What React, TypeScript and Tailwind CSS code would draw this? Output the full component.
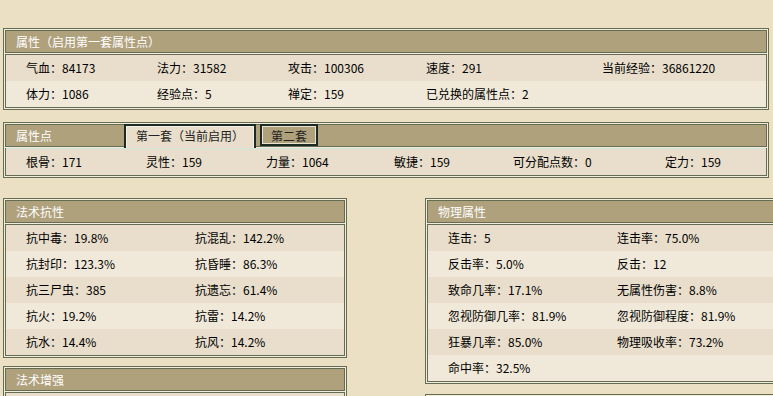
import type { ReactNode } from 'react';

// Character stat sheet: old-school table panels with double borders.
const FONT = { fontFamily: '"Noto Sans CJK SC", "Noto Sans", sans-serif' };

type Cell = [string, string] | null;

function Row({ cells, cols, dark }: { cells: Cell[]; cols: string; dark: boolean }) {
  return (
    <div
      className={`grid h-[26px] items-center pl-5 text-[12px] text-black ${cols} ${
        dark ? 'bg-[#e8decb]' : 'bg-[#f0e9d9]'
      }`}
    >
      {cells.map((c, i) => (
        <span key={i} className="whitespace-nowrap leading-none">
          {c ? `${c[0]}：${c[1]}` : ''}
        </span>
      ))}
    </div>
  );
}

function Panel({
  title,
  width,
  children,
  tabs,
}: {
  title: string;
  width: string;
  children?: ReactNode;
  tabs?: ReactNode;
}) {
  return (
    <div className={`border border-[#646d52] bg-[#f3ecdc] p-px flex flex-col gap-px ${width}`}>
      <div className="relative h-[23px] border border-[#646d52] bg-[#b0a17d] pl-[10px] flex items-center">
        <span className="text-[12px] text-white leading-none">{title}</span>
        {tabs}
      </div>
      {children && <div className="border border-[#646d52]">{children}</div>}
    </div>
  );
}

const top: Cell[][] = [
  [['气血', '84173'], ['法力', '31582'], ['攻击', '100306'], ['速度', '291'], ['当前经验', '36861220']],
  [['体力', '1086'], ['经验点', '5'], ['禅定', '159'], ['已兑换的属性点', '2'], null],
];

const points: Cell[] = [
  ['根骨', '171'],
  ['灵性', '159'],
  ['力量', '1064'],
  ['敏捷', '159'],
  ['可分配点数', '0'],
  ['定力', '159'],
];

const resist: Cell[][] = [
  [['抗中毒', '19.8%'], ['抗混乱', '142.2%']],
  [['抗封印', '123.3%'], ['抗昏睡', '86.3%']],
  [['抗三尸虫', '385'], ['抗遗忘', '61.4%']],
  [['抗火', '19.2%'], ['抗雷', '14.2%']],
  [['抗水', '14.4%'], ['抗风', '14.2%']],
];

const physical: Cell[][] = [
  [['连击', '5'], ['连击率', '75.0%']],
  [['反击率', '5.0%'], ['反击', '12']],
  [['致命几率', '17.1%'], ['无属性伤害', '8.8%']],
  [['忽视防御几率', '81.9%'], ['忽视防御程度', '81.9%']],
  [['狂暴几率', '85.0%'], ['物理吸收率', '73.2%']],
  [['命中率', '32.5%'], null],
];

function Tabs() {
  return (
    <div className="absolute left-[118px] top-[-1px] flex gap-[4px]">
      <div className="h-[24px] border-2 border-b-0 border-[#1c2a26] bg-[#e8decb]">
        <div className="h-full border border-b-0 border-[#f4f0e6] px-[9px] pt-[3px] text-[12px] leading-none text-[#222] whitespace-nowrap">
          第一套（当前启用）
        </div>
      </div>
      <div className="h-[22px] border-2 border-[#1c2a26] bg-[#b0a17d]">
        <div className="h-full border border-[#e8e2d0] px-[8px] pt-[3px] text-[12px] leading-none text-[#222] whitespace-nowrap">
          第二套
        </div>
      </div>
    </div>
  );
}

export default function App() {
  return (
    <div className="w-[773px] h-[396px] overflow-hidden bg-[#ebdfc4] pl-[3px] pt-[28px]" style={FONT}>
      <Panel title="属性（启用第一套属性点）" width="w-[766px]">
        {top.map((r, i) => (
          <Row key={i} cells={r} cols="grid-cols-[131px_131px_138px_176px_1fr]" dark={i % 2 === 0} />
        ))}
      </Panel>

      <div className="mt-[12px]">
        <Panel title="属性点" width="w-[766px]" tabs={<Tabs />}>
          <div className="border-t border-[#cfe4dc] -mt-px">
            <Row cells={points} cols="grid-cols-[120px_120px_128px_119px_152px_1fr]" dark />
          </div>
        </Panel>
      </div>

      <div className="mt-[20px] flex items-start gap-[78px]">
        <div className="flex flex-col gap-[8px]">
          <Panel title="法术抗性" width="w-[344px]">
            {resist.map((r, i) => (
              <Row key={i} cells={r} cols="grid-cols-[169px_1fr]" dark={i % 2 === 0} />
            ))}
          </Panel>
          <Panel title="法术增强" width="w-[344px]">
            <div className="h-[26px] bg-[#e8decb]" />
          </Panel>
        </div>
        <div className="flex flex-col gap-[10px] shrink-0">
          <Panel title="物理属性" width="w-[360px]">
            {physical.map((r, i) => (
              <Row key={i} cells={r} cols="grid-cols-[169px_1fr]" dark={i % 2 === 0} />
            ))}
          </Panel>
          <Panel title="" width="w-[360px]" />
        </div>
      </div>
    </div>
  );
}
